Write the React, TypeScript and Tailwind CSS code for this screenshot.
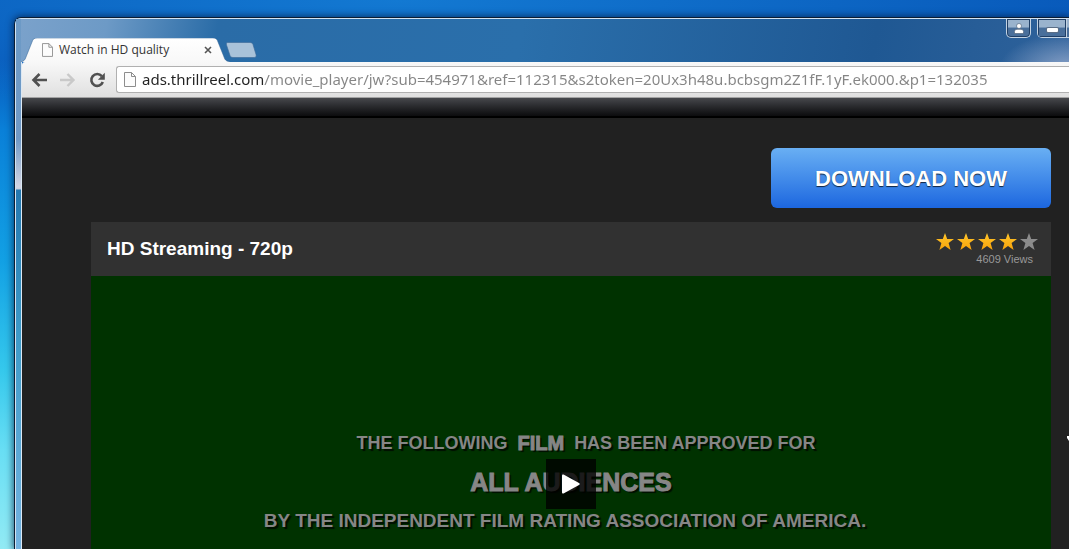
import type { ReactNode } from 'react';

const PAGE_URL =
  'ads.thrillreel.com/movie_player/jw?sub=454971&ref=112315&s2token=20Ux3h48u.bcbsgm2Z1fF.1yF.ek000.&p1=132035';

const RATING = 4;

function PageIcon({ className }: { className: string }) {
  return (
    <svg viewBox="0 0 12 15" className={className} fill="none" aria-hidden="true">
      <path d="M.5.5h7l4 4v10H.5z" fill="#fcfcfc" stroke="#8d8d8d" />
      <path d="M7.5.5v4h4" stroke="#8d8d8d" />
    </svg>
  );
}

function Star({ filled }: { filled: boolean }) {
  return (
    <svg viewBox="0 0 18 17" className="h-[17px] w-[18px]" aria-hidden="true">
      <path
        d="M9 0l2.200 6H18l-5.400 4.100L14.600 17 9 12.900 3.400 17l2-6.900L0 6h6.800z"
        fill={filled ? 'url(#star-on)' : '#8c8c8c'}
      />
    </svg>
  );
}

function NavButton({ label, children }: { label: string; children: ReactNode }) {
  return (
    <button type="button" aria-label={label} className="flex size-4 items-center justify-center">
      <svg viewBox="0 0 16 16" className="size-4" fill="none">
        {children}
      </svg>
    </button>
  );
}

function TitleBar() {
  return (
    <div className="flex h-[43px] justify-between overflow-hidden">
      <div className="flex items-end">
        {/* Active tab */}
        <div className="relative h-6 w-[209px] shrink-0">
          <svg viewBox="0 0 209 24" className="absolute inset-0 h-6 w-[209px]" aria-hidden="true">
            <defs>
              <linearGradient id="tab-fill" x1="0" y1="0" x2="0" y2="1">
                <stop offset="0" stopColor="#ffffff" />
                <stop offset="1" stopColor="#f8f8f8" />
              </linearGradient>
            </defs>
            <path
              d="M0 24c3-1 4-2 5-5l6-15c1-3 2-4 5-4h176c3 0 4 1 5 4l6 15c1 3 2 4 6 5z"
              fill="url(#tab-fill)"
            />
            <path
              d="M0 24c3-1 4-2 5-5l6-15c1-3 2-4 5-4h176c3 0 4 1 5 4l6 15c1 3 2 4 6 5"
              fill="none"
              stroke="#2b5f93"
              strokeOpacity=".5"
            />
          </svg>
          <div className="relative flex h-6 items-center pr-[18px] pl-[21px]">
            <PageIcon className="h-[14px] w-[11px]" />
            <span className="ml-[6px] flex-1 text-[12px] leading-4 whitespace-nowrap text-[#333]">
              Watch in HD quality
            </span>
            <button type="button" aria-label="Close tab" className="size-2">
              <svg viewBox="0 0 8 8" className="size-2" stroke="#555" strokeWidth="1.600">
                <path d="M1 1l6 6M7 1L1 7" />
              </svg>
            </button>
          </div>
        </div>
        <button type="button" aria-label="New tab" className="mb-1 -ml-[5px]">
          <svg viewBox="0 0 32 16" className="h-4 w-8">
            <path
              d="M3 .5h22c2 0 2.500 1 3 2l3 10c.5 2 0 3-2 3H8c-2 0-2.500-1-3-2L1.500 3C1 1 1.500.5 3 .5z"
              fill="#a9c2d9"
              stroke="#3a6796"
              strokeOpacity=".6"
            />
          </svg>
        </button>
      </div>

      {/* Caption buttons */}
      <div className="-mr-[26px] flex h-[19px] shrink-0 gap-[6px]">
        <button
          type="button"
          aria-label="Profile"
          className="flex w-[25px] items-center justify-center rounded-b-[5px] border border-t-0 border-[#c3d3e3] bg-linear-to-b from-[#9ab3cd] from-45% to-[#496f9b] to-50% shadow-[inset_0_0_0_1px_#203f66]"
        >
          <svg viewBox="0 0 10 11" className="h-[11px] w-[10px]" fill="#fff" stroke="#41556e" strokeWidth=".6">
            <path d="M.5 10.500V8.300Q.5 6.300 3 6.300h4q2.500 0 2.500 2v2.200z" />
            <circle cx="5" cy="3" r="2.500" />
          </svg>
        </button>
        <div className="flex overflow-hidden rounded-b-[5px] border border-t-0 border-[#c3d3e3]">
          <button
            type="button"
            aria-label="Minimize"
            className="flex w-7 items-center justify-center bg-linear-to-b from-[#9ab3cd] from-45% to-[#496f9b] to-50% pt-1 shadow-[inset_0_0_0_1px_#203f66]"
          >
            <span className="h-1 w-[11px] rounded-[1px] bg-white shadow-[0_0_0_1px_#5c6e86]" />
          </button>
          <button
            type="button"
            aria-label="Maximize"
            className="w-7 border-l border-[#c3d3e3] bg-linear-to-b from-[#9ab3cd] from-45% to-[#496f9b] to-50%"
          />
        </div>
      </div>
    </div>
  );
}

function Toolbar() {
  return (
    <div className="flex h-9 items-center gap-[13px] overflow-hidden rounded-tl-[3px] border-b border-[#a3a3a3] bg-linear-to-b from-[#f8f8f8] to-[#e0e0e0] pl-[9px]">
      <NavButton label="Back">
        <path d="M16 8H3M8.500 2L2.500 8l6 6" stroke="#515151" strokeWidth="2.600" />
      </NavButton>
      <NavButton label="Forward">
        <path d="M0 8h13M7.500 2l6 6-6 6" stroke="#c9c9c9" strokeWidth="2.400" />
      </NavButton>
      <NavButton label="Reload">
        <path d="M12.800 4.200A5.900 5.900 0 1 0 13.800 10" stroke="#515151" strokeWidth="2.600" />
        <path d="M15.800.8v6.900H8.900z" fill="#515151" />
      </NavButton>
      <div className="-ml-[2px] flex h-[27px] flex-1 items-center overflow-hidden rounded-l-[3px] border border-r-0 border-[#b0b0b0] bg-white pl-[7px]">
        <PageIcon className="h-[15px] w-3 shrink-0" />
        {/* Host in black, path in grey */}
        <input
          type="text"
          aria-label="Address"
          defaultValue={PAGE_URL}
          spellCheck={false}
          className="ml-[6px] h-6 min-w-0 flex-1 bg-[linear-gradient(to_right,#222_122px,#858585_122px)] bg-clip-text pb-[2px] font-['Noto_Sans','Open_Sans',sans-serif] text-[15px] leading-6 text-transparent outline-none"
        />
      </div>
    </div>
  );
}

function VideoPlayer() {
  return (
    <div className="relative aspect-[30/13] overflow-hidden bg-[#003200]">
      <div className="flex flex-col items-center pt-[153px] font-bold whitespace-nowrap text-[#868686] [text-shadow:2px_2px_1px_#000b]">
        <p className="flex h-7 items-center gap-[10px] pl-[30px] text-[18px]">
          THE FOLLOWING
          <strong className="text-[20px] [-webkit-text-stroke:1px_#868686]">FILM</strong>
          HAS BEEN APPROVED FOR
        </p>
        <p className="mt-[9px] h-8 text-[25px] leading-8 [-webkit-text-stroke:1px_#868686]">ALL AUDIENCES</p>
        <p className="mt-[9px] h-7 pr-[12px] text-[19px] leading-7">
          BY THE INDEPENDENT FILM RATING ASSOCIATION OF AMERICA.
        </p>
      </div>
      <button
        type="button"
        aria-label="Play"
        className="absolute inset-0 m-auto flex size-[50px] items-center justify-center bg-black/80"
      >
        <svg viewBox="0 0 18 20" className="h-5 w-[18px]" fill="#fff">
          <path d="M0 1.500Q0 0 1.500.6L17 9q1.500 1 0 2L1.500 19.400Q0 20 0 18.500z" />
        </svg>
      </button>
    </div>
  );
}

export default function App() {
  return (
    <div className="flex h-screen overflow-hidden bg-[radial-gradient(ellipse_700px_120px_at_400px_0,#1379d2,transparent),linear-gradient(to_bottom,#0859ba,#0859ba_60px,#0a80d8_130px,#12a0e4_260px,#35c8ec_370px,#68def4_450px,#92eaf4)] pt-[17px] pl-[14px] font-['Liberation_Sans',Arial,sans-serif]">
      {/* Browser window, running off the right and bottom of the desktop */}
      <div className="flex min-w-0 flex-1 rounded-tl-[7px] border-t border-l border-[#0b1d33] shadow-[0_0_7px_1px_#001a40b3]">
        <div className="flex min-w-0 flex-1 flex-col rounded-tl-[6px] border-t border-l border-[#d3e3f2] bg-[radial-gradient(ellipse_70px_36px_at_100%_50px,#8ba3c8,transparent),linear-gradient(100deg,#7ba2cb,#6d9ac6_90px,#2a6ca7_200px,#2a6fab_500px,#1f5893_850px,#2f629b)] bg-[length:100%_43px] bg-no-repeat font-['Open_Sans','Noto_Sans',sans-serif]">
          <div className="-mb-[43px] flex min-h-0 flex-1 bg-[linear-gradient(to_bottom,#6d9ac6_43px,#7099c6_120px,#d3d5e4_168px,#c9cede_170px,#2478b0_171px,#3f9bc9_320px,#80b8e6)] bg-[length:5px_100%] bg-no-repeat pl-[5px]">
            <div className="flex min-w-0 flex-1 flex-col">
              <TitleBar />
              <div className="flex min-h-0 flex-1 flex-col border-l border-[#dce8f3]">
                <Toolbar />
                <div className="relative min-h-0 flex-1 overflow-hidden bg-[#212121] font-['Liberation_Sans',Arial,sans-serif]">
                  <div className="h-5 border-b-2 border-black bg-linear-to-b from-[#46484c] to-[#0c0c0e]" />
                  <main className="pt-[30px] pr-[18px] pl-[69px]">
                    <a
                      href="#download"
                      className="ml-auto flex h-[60px] w-[280px] items-center justify-center rounded-md bg-linear-to-b from-[#69aff3] to-[#1c66df] text-[22px] font-bold text-white [text-shadow:0_1px_1px_#000b]"
                    >
                      DOWNLOAD NOW
                    </a>
                    <section className="mt-[14px]">
                      <header className="flex h-[54px] items-center justify-between bg-[#313131] pr-[13px] pl-4">
                        <h1 className="text-[19px] font-bold text-white">HD Streaming - 720p</h1>
                        <div className="flex flex-col items-end">
                          <svg className="absolute size-0" aria-hidden="true">
                            <linearGradient id="star-on" x1="0" y1="0" x2="0" y2="1">
                              <stop offset="0" stopColor="#ffc62b" />
                              <stop offset="1" stopColor="#f9a30a" />
                            </linearGradient>
                          </svg>
                          <div className="flex gap-[3px]" role="img" aria-label="4 out of 5 stars">
                            {[1, 2, 3, 4, 5].map((n) => (
                              <Star key={n} filled={n <= RATING} />
                            ))}
                          </div>
                          <p className="mt-[2px] pr-[5px] text-[11px] leading-[14px] text-[#999]">4609 Views</p>
                        </div>
                      </header>
                      <VideoPlayer />
                    </section>
                  </main>
                  {/* Tip of the mouse pointer, the rest is past the edge */}
                  <svg viewBox="0 0 2 5" className="absolute top-[338px] right-0 h-[5px] w-[2px]" aria-hidden="true">
                    <path d="M2 0H0v2l2 3z" fill="#fff" />
                  </svg>
                </div>
              </div>
            </div>
          </div>
        </div>
      </div>
    </div>
  );
}
